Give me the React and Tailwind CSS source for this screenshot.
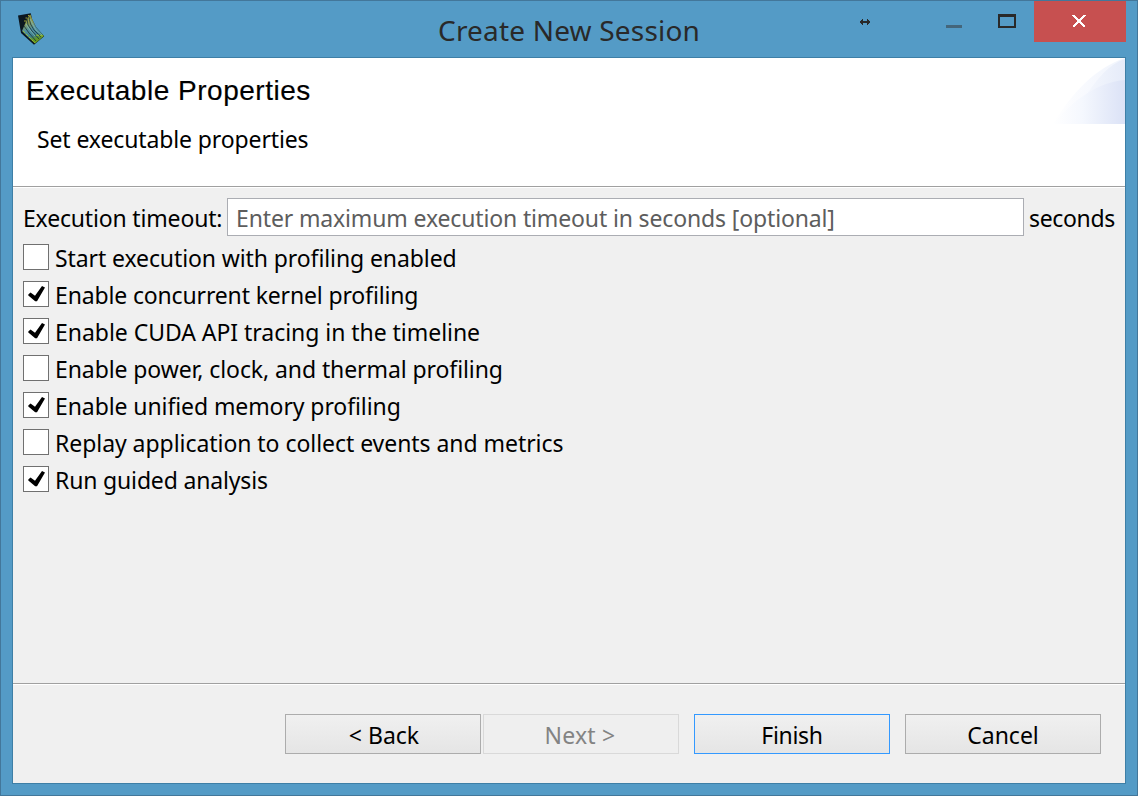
import React from 'react';

const options = [
  { label: 'Start execution with profiling enabled', on: false, track: 'tracking-[-0.1px]' },
  { label: 'Enable concurrent kernel profiling', on: true, track: 'tracking-[-0.15px]' },
  { label: 'Enable CUDA API tracing in the timeline', on: true, track: 'tracking-[-0.04px]' },
  { label: 'Enable power, clock, and thermal profiling', on: false, track: 'tracking-[-0.09px]' },
  { label: 'Enable unified memory profiling', on: true, track: 'tracking-[-0.09px]' },
  { label: 'Replay application to collect events and metrics', on: false, track: 'tracking-[-0.05px]' },
  { label: 'Run guided analysis', on: true, track: 'tracking-[-0.16px]' },
];

function AppIcon() {
  return (
    <svg className="mt-[12px] ml-[16px] h-[34px] w-[30px] shrink-0" viewBox="0 0 30 34" fill="none">
      <defs>
        <linearGradient id="ribbons" x1="10" y1="2" x2="20" y2="30" gradientUnits="userSpaceOnUse">
          <stop offset="0" stopColor="#8f8f35" />
          <stop offset=".25" stopColor="#8e9b50" />
          <stop offset=".5" stopColor="#4f8ea0" />
          <stop offset=".72" stopColor="#3f8290" />
          <stop offset=".85" stopColor="#5f9428" />
          <stop offset="1" stopColor="#6d9a1c" />
        </linearGradient>
      </defs>
      <path d="M1 2.5L13.8 0.3L15 6L19 14L27.2 23.2L17 31.8L4 20Z" fill="#0c1720" />
      <path d="M11 4L13.5 1.5L15 6L19 14L27 23L18 30.5L12 25L5 18L8 11Z" fill="url(#ribbons)" />
      <path d="M10 6L11 12L15 18L22 26M12 4L13.5 11L17 17L24 24M7 13L12 20L19 28" stroke="#16323a" strokeWidth=".8" />
      <path d="M13 6L15.5 11L19 17L25 22M9 11L13 17L18 23" stroke="#82b8b4" strokeWidth=".8" />
      <path d="M6 18L12 24L18 30M19 22L26 23" stroke="#9bbd2c" strokeWidth="1" strokeDasharray="3 1" />
      <path d="M8.5 5H10M11 2.5H12.5M7 8H9" stroke="#a1a331" strokeWidth="1" />
    </svg>
  );
}

function TitleBar() {
  return (
    <header className="flex h-[56px] items-start">
      <AppIcon />
      <h1 className="ml-[391px] w-[380px] whitespace-nowrap pt-[10px] font-['Noto_Sans',sans-serif] text-[28px] leading-[38px] tracking-[0.19px] text-[#292929]">Create New Session</h1>
      <svg className="mt-[17px] ml-[42px] h-[8px] w-[10px] shrink-0" viewBox="0 0 10 8" shapeRendering="crispEdges" fill="#292929">
        <path d="M0 3H1V2H2V1H3V3H7V1H8V2H9V3H10V5H9V6H8V7H7V5H3V7H2V6H1V5H0Z" />
      </svg>
      <span className="mt-[24px] ml-[76px] h-[3px] w-[16px] shrink-0 bg-[#44667b]" />
      <span className="mt-[13px] ml-[36px] h-[14px] w-[18px] shrink-0 border-2 border-t-[3px] border-[#292929]" />
      <button className="ml-[18px] flex h-[41px] w-[92px] shrink-0 justify-center bg-[#c75050] pt-[14px]" aria-label="Close">
        <svg className="mr-[2px] h-[12px] w-[14px]" viewBox="0 0 14 12" shapeRendering="crispEdges" stroke="#fff" strokeWidth="2.4">
          <path d="M1 0L13 12M13 0L1 12" />
        </svg>
      </button>
    </header>
  );
}

function Banner() {
  return (
    <section className="flex h-[130px] shrink-0 justify-between border-b border-white bg-white">
      <div className="flex h-[129px] grow flex-col border-b border-[#a0a0a0]">
        <h2 className="mt-[16px] ml-[13px] whitespace-nowrap font-['Liberation_Sans',sans-serif] text-[28px] leading-[34px] tracking-[0.52px] text-black [-webkit-text-stroke:0.15px_#000]">Executable Properties</h2>
        <p className="mt-[15px] ml-[24px] whitespace-nowrap leading-[32px] tracking-[-0.12px]">Set executable properties</p>
      </div>
      <div className="h-[129px] w-[72px] border-b border-[#a0a0a0]">
        <svg className="h-[66px] w-[72px]" viewBox="0 0 72 66">
          <defs>
            <linearGradient id="outer" x1="0" x2="1">
              <stop offset="0" stopColor="#fff" />
              <stop offset=".5" stopColor="#f7f9fe" />
              <stop offset="1" stopColor="#f0f4fc" />
            </linearGradient>
            <linearGradient id="mid" x1="0" x2="1">
              <stop offset="0" stopColor="#f4f7fd" />
              <stop offset="1" stopColor="#e5ebf9" />
            </linearGradient>
            <linearGradient id="inner" x1="0" x2="1">
              <stop offset="0" stopColor="#fff" />
              <stop offset=".4" stopColor="#f5f8fe" />
              <stop offset="1" stopColor="#dbe2f6" />
            </linearGradient>
          </defs>
          <path d="M0 66C18 36 42 10 72 0V66Z" fill="url(#outer)" />
          <path d="M34 36C44 21 56 6 72 1V36Z" fill="url(#mid)" />
          <path d="M0 66C20 42 45 24 72 22V66Z" fill="url(#inner)" />
        </svg>
      </div>
    </section>
  );
}

function Option({ label, on, track }) {
  return (
    <label className="flex h-[37px] items-start">
      <span className="flex h-[26px] w-[26px] shrink-0 border border-[#707070] bg-white">
        {on && (
          <svg className="h-[24px] w-[24px]" viewBox="0 0 24 24">
            <path d="M4.3 12.6L6.5 10.4L11 13.8L18 4L21 5.4L13 19.2H11.2L4.3 13.5Z" fill="#000" />
          </svg>
        )}
      </span>
      <span className={`ml-[6px] mt-[-2px] whitespace-nowrap leading-[32px] ${track}`}>{label}</span>
    </label>
  );
}

const button = 'flex h-[40px] w-[196px] shrink-0 items-center justify-center whitespace-nowrap border pt-[3px]';

export default function App() {
  return (
    <div className="flex h-[796px] w-[1138px] flex-col overflow-hidden border border-[#43779a] bg-[#549bc6] font-['Noto_Sans',sans-serif] text-[23px] text-black">
      <TitleBar />
      <main className="ml-[11px] flex h-[727px] w-[1114px] flex-col border border-[#3e7fa6] bg-[#f0f0f0]">
        <Banner />
        <section className="flex h-[495px] shrink-0 flex-col px-[10px] pt-[10px]">
          <div className="flex h-[38px] items-center">
            <label className="w-[204px] shrink-0 whitespace-nowrap pt-[2px] tracking-[-0.17px]">Execution timeout:</label>
            <div className="flex h-[38px] w-[797px] shrink-0 items-center border border-[#abadb3] bg-white pt-[3px] pl-[8px]">
              <span className="whitespace-nowrap tracking-[-0.14px] text-[#5d5d5d]">Enter maximum execution timeout in seconds [optional]</span>
            </div>
            <span className="ml-[5px] whitespace-nowrap pt-[2px] tracking-[-0.35px]">seconds</span>
          </div>
          <div className="mt-[8px] flex flex-col">
            {options.map((o) => <Option key={o.label} {...o} />)}
          </div>
        </section>
        <footer className="flex h-[100px] shrink-0 flex-col border-t border-[#a0a0a0]">
          <div className="flex grow items-start border-t border-white pt-[29px] pl-[272px]">
            <button className={`${button} border-[#acacac] bg-linear-to-b from-[#f0f0f0] to-[#e5e5e5] pl-[2px]`}>&lt; Back</button>
            <button disabled className={`${button} ml-[2px] border-[#d9d9d9] bg-[#efefef] pr-[2px] tracking-[0.2px] text-[#838383]`}>Next &gt;</button>
            <button className={`${button} ml-[15px] border-[#3399ff] bg-linear-to-b from-[#f0f0f0] to-[#e5e5e5] tracking-[-0.3px]`}>Finish</button>
            <button className={`${button} ml-[15px] border-[#acacac] bg-linear-to-b from-[#f0f0f0] to-[#e5e5e5]`}>Cancel</button>
          </div>
        </footer>
      </main>
    </div>
  );
}
